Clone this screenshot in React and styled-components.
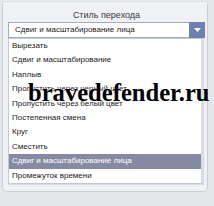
import styled, { createGlobalStyle } from "styled-components";

const items = [
  "Вырезать",
  "Сдвиг и масштабирование",
  "Наплыв",
  "Пропустить через черный цвет",
  "Пропустить через белый цвет",
  "Постепенная смена",
  "Круг",
  "Сместить",
  "Сдвиг и масштабирование лица",
  "Промежуток времени",
];

const selected = "Сдвиг и масштабирование лица";

export default function App() {
  return (
    <>
      <GlobalStyle />
      <Page>
        <Panel>
          <Title>Стиль перехода</Title>
          <Select>
            <Value>{selected}</Value>
            <Arrow>
              <svg width="7" height="4" viewBox="0 0 7 4">
                <path d="M0 0h7L3.5 4z" fill="#fff" />
              </svg>
            </Arrow>
            <List>
              {items.map((item) => (
                <Item key={item} active={item === selected}>
                  {item}
                </Item>
              ))}
            </List>
          </Select>
        </Panel>
        <Watermark>bravedefender.ru</Watermark>
      </Page>
    </>
  );
}

const GlobalStyle = createGlobalStyle`
  body {
    margin: 0;
    background: #e4e6ea;
    font-family: "Liberation Sans", "DejaVu Sans", sans-serif;
  }
`;

const Page = styled.div`
  position: relative;
  width: 214px;
  height: 206px;
  padding: 3px 0 0 2px;
  box-sizing: border-box;
`;

const Panel = styled.div`
  width: 206px;
  height: 189px;
  box-sizing: border-box;
  background: #f0f1f4;
  border: 1px solid #c9cdd6;
  border-top-color: #fbfbfc;
  border-radius: 0 0 5px 5px;
  padding: 5px 2px 0 5px;
`;

const Title = styled.div`
  text-align: center;
  font-size: 9px;
  line-height: 12px;
  color: #3a3a3a;
  margin-bottom: 1px;
`;

const Select = styled.div`
  position: relative;
  display: flex;
  height: 16px;
  box-sizing: border-box;
  border: 1px solid #a4abba;
  background: #fff;
`;

const Value = styled.div`
  flex: 1;
  font-size: 8px;
  line-height: 14px;
  padding-left: 6px;
  color: #1a1a1a;
  white-space: nowrap;
  overflow: hidden;
`;

const Arrow = styled.div`
  width: 16px;
  margin: -1px -1px -1px 0;
  background: #6e80ad;
  display: flex;
  align-items: center;
  justify-content: center;
`;

const List = styled.div`
  position: absolute;
  top: 15px;
  left: -1px;
  right: 0;
  background: #fff;
  border: 1px solid #c3c8d2;
  border-right: 3px solid #d9dce2;
  box-shadow: 0 1px 1px rgba(0, 0, 0, 0.08);
`;

const Item = styled.div`
  height: 14.4px;
  line-height: 14.4px;
  font-size: 8px;
  padding-left: 3px;
  white-space: nowrap;
  color: ${(props) => (props.active ? "#fff" : "#1a1a1a")};
  background: ${(props) => (props.active ? "#868ba3" : "transparent")};
`;

const Watermark = styled.div`
  position: absolute;
  left: 28px;
  top: 79px;
  font-family: "Liberation Serif", serif;
  font-weight: bold;
  font-size: 24.6px;
  line-height: 28px;
  color: #000;
  text-shadow: 0 0 2px #fff;
  white-space: nowrap;
`;
